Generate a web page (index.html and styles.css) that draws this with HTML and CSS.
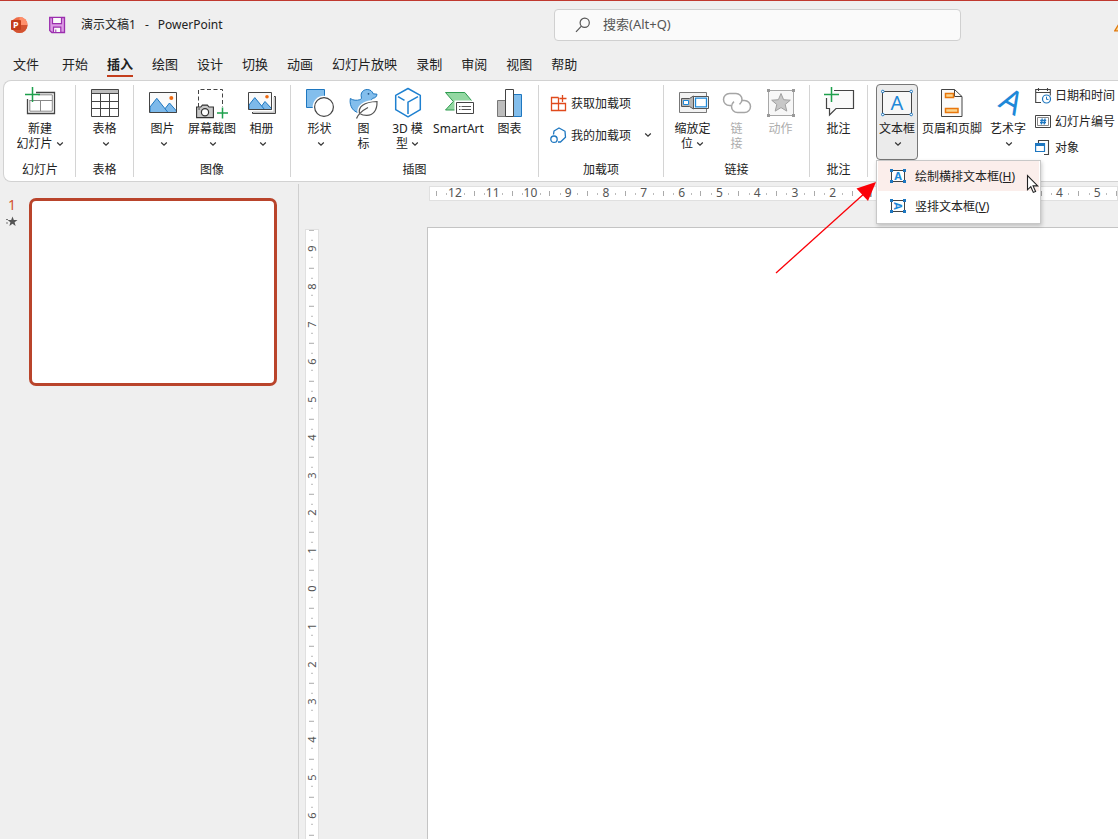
FILE: index.html
```html
<!DOCTYPE html>
<html lang="zh-CN">
<head>
<meta charset="utf-8">
<title>演示文稿1 - PowerPoint</title>
<link rel="stylesheet" href="styles.css">
</head>
<body>
<svg width="0" height="0" class="defs" aria-hidden="true">
  <symbol id="chev" viewBox="0 0 8 6"><path d="M1.200 1.500 4 4.200 6.800 1.500" fill="none" stroke="#333" stroke-width="1.200"/></symbol>
</svg>

<header class="titlebar">
  <div class="title-left">
    <svg class="app-logo" width="18" height="18" viewBox="0 0 18 18">
      <circle cx="9.500" cy="9" r="8" fill="#ed6c47"/>
      <path d="M9.500 1a8 8 0 0 1 8 8h-8z" fill="#ff8f6b"/>
      <path d="M1.500 9h16a8 8 0 0 1-16 0z" fill="#d35230"/>
      <rect x="1" y="4" width="10" height="10" rx="1" fill="#c43e1c"/>
      <text x="3" y="12" class="logo-letter">P</text>
    </svg>
    <button class="icon-btn" aria-label="保存">
      <svg width="18" height="18" viewBox="0 0 18 18">
        <path d="M1.700 1.500h14.800v15H3.800l-2.100-2z" fill="#dc9be4" stroke="#9b2fae" stroke-width="1.300"/>
        <path d="M4.500 1.500h9v6.200h-9z" fill="#fafafa" stroke="#9b2fae" stroke-width="1.200"/>
        <path d="M5.500 11.200h7.300v5.300H5.500z" fill="#fafafa" stroke="#9b2fae" stroke-width="1.200"/>
        <path d="M7.800 13.500v3" stroke="#9b2fae"/>
      </svg>
    </button>
    <span class="doc-title"><span>演示文稿1</span><span>-</span><span>PowerPoint</span></span>
  </div>
  <label class="search">
    <svg width="16" height="16" viewBox="0 0 16 16"><circle cx="9.700" cy="5.800" r="4.600" fill="none" stroke="#555" stroke-width="1.200"/><path d="M6.400 9.200 1 14.800" stroke="#555" stroke-width="1.200"/></svg>
    <input type="text" placeholder="搜索(Alt+Q)" aria-label="搜索">
  </label>
  <svg class="warning" width="16" height="14" viewBox="0 0 16 14"><path d="M8 1 15.300 12.800H.8z" fill="#ffd98a" stroke="#e07a10" stroke-width="1.300"/></svg>
</header>

<nav class="tabs">
  <button class="tab file">文件</button>
  <button class="tab">开始</button>
  <button class="tab active">插入</button>
  <button class="tab">绘图</button>
  <button class="tab">设计</button>
  <button class="tab">切换</button>
  <button class="tab">动画</button>
  <button class="tab">幻灯片放映</button>
  <button class="tab">录制</button>
  <button class="tab">审阅</button>
  <button class="tab">视图</button>
  <button class="tab">帮助</button>
</nav>

<section class="ribbon">
  <div class="group g-slide">
    <div class="tools">
      <button class="tool">
        <svg class="ico" viewBox="0 0 32 32"><path d="M12 5.500h18.500v21h-27V12" fill="none" stroke="#444" stroke-width="1.300"/><path d="M14 7.800h14.300v16.400H5.800V13M5.800 13.500h22.500M16.500 13.500v10.700" fill="none" stroke="#888"/><path d="M8.500 0v15M1 7.500h15" stroke="#1ea04c" stroke-width="1.500"/></svg>
        <span>新建<br>幻灯片 <svg class="chev"><use href="#chev"/></svg></span>
      </button>
    </div>
    <div class="caption">幻灯片</div>
  </div>

  <div class="group g-table">
    <div class="tools">
      <button class="tool">
        <svg class="ico" viewBox="0 0 32 32"><path d="M2.500 2.500h27v27h-27z" fill="#fff"/><path d="M2.500 2.500h27v4h-27z" fill="#bdbdbd"/><path d="M2.500 2.500h27v27h-27zM2.500 6.500h27M2.500 14.500h27M2.500 21.500h27M11.500 6.500v23M20.500 6.500v23" fill="none" stroke="#444"/></svg>
        <span>表格</span><svg class="chev"><use href="#chev"/></svg>
      </button>
    </div>
    <div class="caption">表格</div>
  </div>

  <div class="group g-image">
    <div class="tools">
      <button class="tool">
        <svg class="ico" viewBox="0 0 32 32"><path d="M2.500 5.500h27v20h-27z" fill="#fafafa"/><path d="M15 25.500l7.500-9.500 7 8v1.500z" fill="#7db9ea" stroke="#1e77c0"/><path d="M3 20l6.800-8.700L21 25.500H3z" fill="#7db9ea" stroke="#1e77c0"/><path d="M2.500 5.500h27v20h-27z" fill="none" stroke="#444"/><circle cx="24.300" cy="11" r="2" fill="#ee6a10"/></svg>
        <span>图片</span><svg class="chev"><use href="#chev"/></svg>
      </button>
      <button class="tool wide">
        <svg class="ico" viewBox="0 0 32 32"><path d="M2.500 20V2.500h24V20" fill="none" stroke="#444" stroke-dasharray="4 2.500"/><path d="M.6 20h4.200l1.600-1.900h5L13 20h4.400v10.600H.6z" fill="#c8c8c8" stroke="#333" stroke-width="1.100"/><circle cx="9" cy="25.200" r="3.600" fill="#fff" stroke="#333" stroke-width="1.200"/><path d="M2.300 22h1.600" stroke="#333"/><path d="M26.500 20.500v11M21 26h11" stroke="#1ea04c" stroke-width="1.500"/></svg>
        <span>屏幕截图</span><svg class="chev"><use href="#chev"/></svg>
      </button>
      <button class="tool">
        <svg class="ico" viewBox="0 0 32 32"><path d="M28 9.500h1.500v17h-23V25" fill="none" stroke="#444"/><path d="M29 10v16H7v-1.500h20.500V10z" fill="#c8c8c8"/><path d="M2.500 5.500h23v17h-23z" fill="#fafafa"/><path d="M13 22.500l6-8 6.500 7v1z" fill="#7db9ea" stroke="#1e77c0"/><path d="M3 18l5.800-7.400 9.700 11.900H3z" fill="#7db9ea" stroke="#1e77c0"/><path d="M2.500 5.500h23v17h-23z" fill="none" stroke="#444"/><circle cx="21" cy="9.700" r="1.800" fill="#ee6a10"/></svg>
        <span>相册</span><svg class="chev"><use href="#chev"/></svg>
      </button>
    </div>
    <div class="caption">图像</div>
  </div>

  <div class="group g-illus">
    <div class="tools">
      <button class="tool">
        <svg class="ico" viewBox="0 0 32 32"><path d="M2.500 2.500h18v18h-18z" fill="#83beec" stroke="#1e77c0"/><circle cx="20" cy="20" r="11.300" fill="#fff"/><circle cx="20" cy="20" r="9.400" fill="#fff" stroke="#444" stroke-width="1.200"/></svg>
        <span>形状</span><svg class="chev"><use href="#chev"/></svg>
      </button>
      <button class="tool">
        <svg class="ico" viewBox="0 0 32 32"><path d="M2.300 11.500c3 2 6.500 2.200 9.500 1.200 1.500-.6 2-1.200 1.500-2.700C12.300 6 15 2.500 19.200 2.500c3 0 5.200 1.800 6 4.300l3.800.4c-.3 2.500-1.800 4-4.500 4.100-1 1.400-1.600 2.200-1 4.700L13 26C6 26 1 20 2.300 11.500z" fill="#83beec" stroke="#1e77c0"/><circle cx="20.500" cy="6.800" r=".9" fill="#1e4f80"/><path d="M11.500 26.500c-1.500-6.500 4-11.500 17.500-12 .3 9-4 14-10.500 13.800-2.500 0-4.500-.3-6-1.300z" fill="#fff" stroke="#fff" stroke-width="4"/><path d="M11.500 26.500c-1.500-6.500 4-11.500 17.500-12 .3 9-4 14-10.500 13.800-2.500 0-4.500-.3-6-1.300" fill="#fff" stroke="#555" stroke-width="1.200"/><path d="M8.500 31.500c1.500-4 6-8 11.500-11" fill="none" stroke="#555" stroke-width="1.300"/></svg>
        <span>图<br>标</span>
      </button>
      <button class="tool">
        <svg class="ico" viewBox="0 0 32 32"><path d="M16 1.500 28.300 8.300v14.400L16 29.800 3.700 22.700V8.300z" fill="#fff" stroke="#1e80d0" stroke-width="1.500" stroke-linejoin="round"/><path d="M26 9.700 16 15.200V27M6 9.600l6.500 3.700" fill="none" stroke="#1e80d0" stroke-width="1.500"/></svg>
        <span>3D 模<br>型 <svg class="chev"><use href="#chev"/></svg></span>
      </button>
      <button class="tool smart">
        <svg class="ico" viewBox="0 0 32 32"><path d="M2.500 5.500h19.300l7.500 9-7.500 8.500H2.500l7.800-8.500z" fill="#93d8a2" stroke="#2e9b4f"/><path d="M11.500 13.500h20v14h-20z" fill="#fff"/><path d="M13.500 15.500h17v11h-17z" fill="#fff" stroke="#444"/><path d="M16 19.500h1.500m1 0H28M16 22.500h1.500m1 0H28" stroke="#555"/></svg>
        <span>SmartArt</span>
      </button>
      <button class="tool">
        <svg class="ico" viewBox="0 0 32 32"><path d="M3.500 13.500h8v16h-8z" fill="#bdbdbd" stroke="#777"/><path d="M19.500 7.500h8v22h-8z" fill="#83beec" stroke="#1e77c0"/><path d="M11.500 2.500h8v27h-8z" fill="#fff" stroke="#444"/></svg>
        <span>图表</span>
      </button>
    </div>
    <div class="caption">插图</div>
  </div>

  <div class="group g-addins">
    <div class="rows">
      <button class="row-tool">
        <svg width="17" height="17" viewBox="0 0 17 17"><path d="M8.500 2.500h-7v13h14v-7h-14M8.500 2.500v13M12.500 0v7M9.500 3.500h7" fill="none" stroke="#e04a1c" stroke-width="1.300"/></svg>
        <span>获取加载项</span>
      </button>
      <button class="row-tool">
        <svg width="17" height="17" viewBox="0 0 17 17"><path d="M3.500 7.500l.5-3.500 5-3 6 3.200.5 6L10.500 15H8" fill="none" stroke="#1e77c0" stroke-width="1.300" stroke-linejoin="round"/><circle cx="4" cy="12.200" r="3.200" fill="#fff" stroke="#1e77c0" stroke-width="1.300"/></svg>
        <span>我的加载项</span><svg class="chev far"><use href="#chev"/></svg>
      </button>
    </div>
    <div class="caption">加载项</div>
  </div>

  <div class="group g-links">
    <div class="tools">
      <button class="tool">
        <svg class="ico" viewBox="0 0 32 32"><path d="M2.500 5.500h27v20h-27z" fill="#f3f3f3" stroke="#777"/><path d="M4.500 11.500h8l4-2.500v13l-4-2.500h-8z" fill="#b5b5b5" stroke="#555"/><path d="M6.500 13.500h5v4h-5z" fill="#fff" stroke="#1e88d8"/><path d="M16.500 9.500h15v12h-15z" fill="#fff" stroke="#555"/><path d="M18.500 11.200h11v8.600h-11z" fill="#fff" stroke="#1e88d8" stroke-width="1.300"/></svg>
        <span>缩放定<br>位 <svg class="chev"><use href="#chev"/></svg></span>
      </button>
      <button class="tool" disabled>
        <svg class="ico" viewBox="0 0 32 32"><path d="M10 18.500H8.500a6 6 0 0 1 0-12h6.500a6 6 0 0 1 6 6c0 2-1 3.600-2.500 4.800" fill="none" stroke="#a5a5a5" stroke-width="1.500"/><path d="M21 13.500h2.500a6 6 0 0 1 0 12h-7a6 6 0 0 1-6-6c0-2 1-3.600 2.500-4.800" fill="none" stroke="#a5a5a5" stroke-width="1.500"/></svg>
        <span>链<br>接</span>
      </button>
      <button class="tool" disabled>
        <svg class="ico" viewBox="0 0 32 32"><path d="M3.500 3.500h25v25h-25z" fill="#f7f7f7" stroke="#a8a8a8"/><path d="M2 2h3v3H2zM27 2h3v3h-3zM2 27h3v3H2zM27 27h3v3h-3z" fill="#999"/><path d="M16 6.500l2.600 6.200 6.700.5-5.100 4.300 1.600 6.600-5.800-3.500-5.800 3.500 1.600-6.600-5.100-4.300 6.700-.5z" fill="#c8c8c8" stroke="#a0a0a0"/></svg>
        <span>动作</span>
      </button>
    </div>
    <div class="caption">链接</div>
  </div>

  <div class="group g-comment">
    <div class="tools">
      <button class="tool">
        <svg class="ico" viewBox="0 0 32 32"><path d="M11 3.500h19.500v18H13L6.500 28v-6.500h-3V11" fill="#fafafa" stroke="#444" stroke-width="1.200"/><path d="M8.500 0v15M1 7.500h15" stroke="#1ea04c" stroke-width="1.500"/></svg>
        <span>批注</span>
      </button>
    </div>
    <div class="caption">批注</div>
  </div>

  <div class="group g-text">
    <div class="tools">
      <div class="menu-host">
        <button class="tool pressed" aria-expanded="true">
          <svg class="ico" viewBox="0 0 32 32"><path d="M1.500 4.500h29v23h-29z" fill="#f7f7f7" stroke="#444"/><g fill="#fff" stroke="#1e77c0"><circle cx="1.800" cy="4.500" r="1.300"/><circle cx="30.200" cy="4.500" r="1.300"/><circle cx="1.800" cy="27.500" r="1.300"/><circle cx="30.200" cy="27.500" r="1.300"/></g><text x="16" y="23" text-anchor="middle" class="blue-a big">A</text></svg>
          <span>文本框</span><svg class="chev"><use href="#chev"/></svg>
        </button>
        <div class="menu" role="menu">
          <button class="menu-item hot" role="menuitem">
            <svg width="18" height="16" viewBox="0 0 18 16"><path d="M2.500 2.500h13v11h-13z" fill="#fff" stroke="#444"/><g fill="#1e77c0"><path d="M1 1h3v3H1zM14 1h3v3h-3zM1 12h3v3H1zM14 12h3v3h-3z"/></g><text x="9" y="12" text-anchor="middle" class="blue-a small">A</text></svg>
            <span>绘制横排文本框(<u>H</u>)</span>
          </button>
          <button class="menu-item" role="menuitem">
            <svg width="18" height="16" viewBox="0 0 18 16"><path d="M2.500 2.500h13v11h-13z" fill="#fff" stroke="#444"/><g fill="#1e77c0"><path d="M1 1h3v3H1zM14 1h3v3h-3zM1 12h3v3H1zM14 12h3v3h-3z"/></g><text x="9" y="12" text-anchor="middle" class="blue-a small" transform="rotate(90 9 8)">A</text></svg>
            <span>竖排文本框(<u>V</u>)</span>
          </button>
          <svg class="cursor" width="13" height="20" viewBox="0 0 13 20"><path d="M1.500 1.500v14.300l3.300-3.100 2.500 5.700 2.300-1-2.500-5.500h4.600z" fill="#fff" stroke="#222" stroke-width="1.100"/></svg>
        </div>
        <svg class="pointer" width="104" height="94" viewBox="0 0 104 94"><path d="M2 92 92 11" stroke="#fb0007" stroke-width="1.300"/><path d="M102 1 94 20 82.500 7.500z" fill="#fb0007"/></svg>
      </div>
      <button class="tool header-tool">
        <svg class="ico" viewBox="0 0 32 32"><path d="M5.500 2.500h13l7.500 7v20H5.500z" fill="#fafafa" stroke="#444"/><path d="M18.500 2.500v7H26" fill="none" stroke="#444"/><path d="M9.500 6.500h8v4h-8zM9.500 21.500h12.500v4H9.500z" fill="#fcd48c" stroke="#e8760c" stroke-width="1.500"/></svg>
        <span>页眉和页脚</span>
      </button>
      <button class="tool art-tool">
        <svg class="ico" viewBox="0 0 32 32"><text x="14" y="24" text-anchor="middle" transform="rotate(30 14 24)" class="blue-a art">A</text></svg>
        <span>艺术字</span><svg class="chev"><use href="#chev"/></svg>
      </button>
      <div class="stack">
        <button class="row-tool">
          <svg width="16" height="17" viewBox="0 0 16 17"><path d="M6 15.500H.7V2.500h14.600v6M.7 5.500h14.600M3.500 1v3M12.500 1v3" fill="none" stroke="#444" stroke-width="1.100"/><circle cx="11.500" cy="12" r="4" fill="#fff" stroke="#1e77c0" stroke-width="1.200"/><path d="M11.500 9.700V12.400h2" fill="none" stroke="#1e77c0"/></svg>
          <span>日期和时间</span>
        </button>
        <button class="row-tool">
          <svg width="16" height="17" viewBox="0 0 16 17"><path d="M.5 2.500h15v12H.5z" fill="#fff" stroke="#444"/><path d="M2.500 4.500h11v8h-11z" fill="#fff" stroke="#888"/><path d="M7.200 5.500l-.8 6M10 5.500l-.8 6M5.200 7.500h6M5 9.700h6" stroke="#1e77c0" stroke-width="1.300"/></svg>
          <span>幻灯片编号</span>
        </button>
        <button class="row-tool">
          <svg width="16" height="17" viewBox="0 0 16 17"><path d="M3.500 4V1.500h10v14H9" fill="none" stroke="#444" stroke-width="1.100"/><path d="M.6 4.500h8.900v8H.6z" fill="#fff" stroke="#1e77c0" stroke-width="1.200"/><path d="M.6 6h8.900" stroke="#1e77c0" stroke-width="2"/></svg>
          <span>对象</span>
        </button>
      </div>
    </div>
  </div>
</section>

<main class="workspace">
  <aside class="thumbs">
    <div class="thumb-meta"><span>1</span><svg width="12" height="11" viewBox="0 0 12 11"><path d="M6.500.5 7.800 4h3.700L8.600 6.200l1 3.800-3.100-2.200L3.400 10l1-3.800L1.600 4h3.600z" fill="#555"/><path d="M0 3.500h2M0 7h2" stroke="#777"/></svg></div>
    <button class="thumb" aria-label="幻灯片 1"></button>
  </aside>
  <div class="editor">
    <div class="ruler-h">
      <span>12</span><span>11</span><span>10</span><span>9</span><span>8</span><span>7</span><span>6</span><span>5</span><span>4</span><span>3</span><span>2</span><span>1</span><span>0</span><span>1</span><span>2</span><span>3</span><span>4</span><span>5</span><span>6</span><span>7</span><span>8</span><span>9</span><span>10</span><span>11</span><span>12</span>
    </div>
    <div class="stage">
      <div class="ruler-v">
        <span>9</span><span>8</span><span>7</span><span>6</span><span>5</span><span>4</span><span>3</span><span>2</span><span>1</span><span>0</span><span>1</span><span>2</span><span>3</span><span>4</span><span>5</span><span>6</span><span>7</span><span>8</span><span>9</span>
      </div>
      <div class="slide"></div>
    </div>
  </div>
</main>
</body>
</html>
```
FILE: styles.css
```css
* { box-sizing: border-box; }

body {
  margin: 0;
  height: 100vh;
  overflow: hidden;
  display: flex;
  flex-direction: column;
  background: #efefef;
  border-top: 1px solid #c0392f;
  color: #222;
  font: 12px/15px "Noto Sans", "Noto Sans CJK SC", sans-serif;
}

button {
  font: inherit;
  color: inherit;
  border: 0;
  padding: 0;
  background: none;
}

.defs { position: absolute; }

svg { flex: none; }

/* Title bar */
.titlebar {
  flex: none;
  height: 47px;
  display: grid;
  grid-template-columns: 554px minmax(0, 407px) 1fr;
  align-items: center;
}

.title-left {
  display: flex;
  align-items: center;
  padding-left: 10px;
}

.logo-letter { font: bold 9px "Noto Sans", sans-serif; fill: #fff; }
.icon-btn { margin: 0 15px 0 20px; height: 18px; }
.doc-title { display: flex; gap: 9px; }

.search {
  height: 32px;
  display: flex;
  align-items: center;
  gap: 12px;
  padding: 0 20px;
  background: #fafafa;
  border: 1px solid #d0d0d0;
  border-radius: 4px;
}

.search input {
  flex: 1;
  min-width: 0;
  border: 0;
  padding: 0 0 2px;
  outline: 0;
  background: none;
  font: 13px/20px "Noto Sans", "Noto Sans CJK SC", sans-serif;
}

.search input::placeholder { color: #555; opacity: 1; }
.warning { justify-self: end; margin-right: -12px; }

/* Tabs */
.tabs {
  flex: none;
  display: flex;
  gap: 19px;
  height: 32px;
  padding: 6px 13px 3px;
}

.tab {
  font-size: 13px;
  line-height: 20px;
  padding-bottom: 1px;
  border-bottom: 2px solid transparent;
  white-space: nowrap;
}

.tab.file { margin-right: 4px; }
.tab.active { font-weight: bold; border-color: #c43e1c; }

/* Ribbon */
.ribbon {
  flex: none;
  display: flex;
  height: 102px;
  margin-left: 3px;
  padding: 4px 0 4px 1px;
  background: #fff;
  border: 1px solid #d2d2d2;
  border-right: 0;
  border-radius: 8px 0 0 8px;
}

.group {
  flex: none;
  display: flex;
  flex-direction: column;
  justify-content: space-between;
  border-right: 1px solid #d4d4d4;
}

.g-slide { width: 71px; }
.g-table { width: 58px; }
.g-image { width: 157px; }
.g-illus { width: 248px; }
.g-addins { width: 125px; }
.g-links { width: 146px; }
.g-comment { width: 58px; }
.g-text { border: 0; padding-left: 8px; }

.tools { display: flex; justify-content: center; margin-top: -1px; }
.g-text .tools { justify-content: flex-start; }
.caption { text-align: center; }

.tool {
  width: 44px;
  height: 76px;
  display: flex;
  flex-direction: column;
  align-items: center;
  padding: 2px 0 0;
  border: 1px solid transparent;
  border-radius: 4px;
  white-space: nowrap;
}

.tool:disabled { color: #adadad; }
.tool.wide { width: 55px; }
.tool.smart { width: 58px; }
.tool.pressed { width: 42px; background: #ebebeb; border-color: #777; }
.tool.header-tool { width: 68px; }
.tool.art-tool { width: 44px; }
.tool > span { margin-top: 2px; }

.g-slide .tool { width: 60px; }

.ico { width: 32px; height: 32px; }
.chev { width: 8px; height: 6px; vertical-align: 1px; }
.tool > .chev { margin: 5px 0 0 2px; }
.chev.far { margin-left: 9px; }

.rows {
  display: flex;
  flex-direction: column;
  gap: 12px;
  padding: 8px 0 0 11px;
}

.row-tool {
  display: flex;
  align-items: center;
  gap: 4px;
  height: 20px;
  white-space: nowrap;
}

.stack {
  display: flex;
  flex-direction: column;
  gap: 6px;
  padding: 1px 0 0 5px;
}

.blue-a { font-family: "Noto Sans", sans-serif; fill: #1e88d8; }
.blue-a.big { font-size: 20px; }
.blue-a.small { font-size: 11px; font-weight: bold; }
.blue-a.art { font-size: 32px; }

/* Drop-down menu */
.menu-host { position: relative; }

.menu {
  position: absolute;
  z-index: 2;
  top: 76px;
  left: 0;
  width: 165px;
  padding: 0 1px 2px;
  background: #fff;
  border: 1px solid #c8c8c8;
  box-shadow: 1px 2px 4px rgba(0, 0, 0, 0.2);
}

.menu-item {
  width: 100%;
  height: 30px;
  display: flex;
  align-items: center;
  gap: 8px;
  padding-left: 11px;
  white-space: nowrap;
}

.menu-item.hot { background: #fbeeeb; }
.cursor { position: absolute; top: 13px; left: 149px; }
.pointer { position: absolute; z-index: 3; top: 97px; right: 40px; }

/* Workspace */
.workspace {
  flex: 1;
  min-height: 0;
  display: flex;
  padding-top: 2px;
}

.thumbs {
  flex: none;
  width: 299px;
  display: flex;
  align-items: flex-start;
  gap: 11px;
  padding: 14px 21px 0 6px;
  border-right: 1px solid #cfcfcf;
}

.thumb-meta {
  width: 12px;
  display: flex;
  flex-direction: column;
  align-items: center;
  color: #d35230;
  font-size: 14px;
  line-height: 14px;
}

.thumb-meta svg { margin-top: 4px; }

.thumb {
  flex: 1;
  aspect-ratio: 248 / 188;
  background: #fff;
  border: 3px solid #b9442b;
  border-radius: 7px;
}

.editor {
  flex: 1;
  min-width: 0;
  display: flex;
  flex-direction: column;
  padding-top: 2px;
}

.ruler-h,
.ruler-v {
  flex: none;
  display: flex;
  overflow: hidden;
  background: #fff;
  color: #555;
}

.ruler-h span,
.ruler-v span {
  flex: none;
  display: flex;
  align-items: center;
  justify-content: center;
}

.ruler-h {
  height: 15px;
  margin-left: 130px;
  padding-left: 6px;
  border: 1px solid #e0e0e0;
  line-height: 11px;
}

.ruler-h span {
  width: 1cm;
  padding-bottom: 2px;
  background:
    linear-gradient(#aaa, #aaa) 0 50% / 1px 5px no-repeat,
    linear-gradient(#bbb, #bbb) 28% 50% / 1px 2px no-repeat,
    linear-gradient(#bbb, #bbb) 76% 50% / 1px 2px no-repeat;
}

.stage {
  flex: 1;
  min-height: 0;
  display: flex;
  padding-top: 26px;
}

.ruler-v {
  flex-direction: column;
  width: 14px;
  margin: 2px 0 0 6px;
  border: 1px solid #e0e0e0;
  border-bottom: 0;
  font-size: 11px;
  line-height: 12px;
}

.ruler-v span {
  height: 1cm;
  padding-left: 1px;
  writing-mode: vertical-rl;
  transform: rotate(180deg);
  background:
    linear-gradient(#aaa, #aaa) 50% 100% / 5px 1px no-repeat,
    linear-gradient(#bbb, #bbb) 50% 26% / 2px 1px no-repeat,
    linear-gradient(#bbb, #bbb) 50% 74% / 2px 1px no-repeat;
}

.slide {
  flex: 1;
  margin-left: 108px;
  background: #fff;
  border: 1px solid #c4c4c4;
  border-width: 1px 0 0 1px;
}
```
